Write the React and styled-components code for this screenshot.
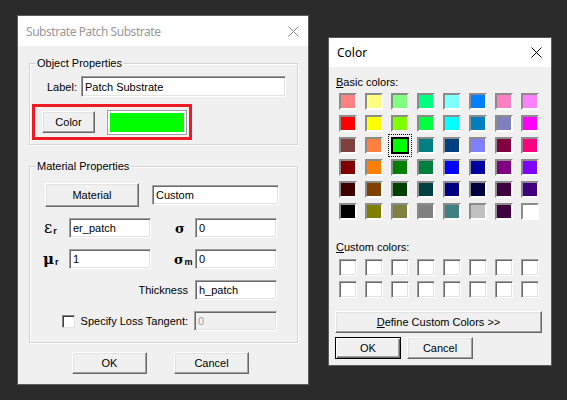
import React from "react";
import styled, { createGlobalStyle, css } from "styled-components";

const Global = createGlobalStyle`
  html, body { margin: 0; padding: 0; background: #2b2b2b; }
  body { font-family: "Liberation Sans", Arial, sans-serif; font-size: 11px; color: #000; }
  * { box-sizing: border-box; }
`;

const Screen = styled.div`
  display: flex;
  align-items: flex-start;
  padding: 15px 0 0 17px;
  height: 400px;
  overflow: hidden;
`;

const Window = styled.div`
  width: ${(p) => p.$w}px;
  height: ${(p) => p.$h}px;
  margin-top: ${(p) => p.$top || 0}px;
  margin-left: ${(p) => p.$left || 0}px;
  background: #f0f0f0;
  border: 1px solid #5c5c5c;
  display: flex;
  flex-direction: column;
`;

const TitleBar = styled.div`
  height: ${(p) => p.$h}px;
  flex: none;
  background: #fff;
  display: flex;
  align-items: center;
  justify-content: space-between;
  padding: 0 9px 0 8px;
  font-family: "Noto Sans", "Open Sans", sans-serif;
  font-size: 12px;
  color: ${(p) => (p.$active ? "#000" : "#999")};
`;

const TitleText = styled.span`
  letter-spacing: -0.45px;
`;

const Close = ({ color }) => (
  <svg width="11" height="11" viewBox="0 0 11 11">
    <path d="M0.5 0.5 L10.5 10.5 M10.5 0.5 L0.5 10.5" stroke={color} strokeWidth="1" fill="none" />
  </svg>
);

const Body = styled.div`
  padding: ${(p) => p.$pad};
  display: flex;
  flex-direction: column;
`;

const Group = styled.fieldset`
  margin: ${(p) => p.$mt || 0}px 0 0 0;
  padding: ${(p) => p.$pad};
  border: 1px solid #d5d5d5;
  box-shadow: inset 1px 1px 0 #fff, 1px 1px 0 #fff;
  min-width: 0;
  display: flex;
  flex-direction: column;
`;

const Legend = styled.legend`
  margin-left: 6px;
  padding: 0 1px;
  line-height: 13px;
  font-size: 11px;
`;

const Row = styled.div`
  display: flex;
  align-items: center;
  gap: ${(p) => p.$gap || 0}px;
  padding-left: ${(p) => p.$pl || 0}px;
  margin-top: ${(p) => p.$mt || 0}px;
`;

const FieldGrid = styled.div`
  display: grid;
  grid-template-columns: 39px 82px 22px 22px 82px;
  grid-auto-rows: 20px;
  align-items: center;
  margin-top: 11px;
`;

const Button = styled.button`
  width: ${(p) => p.$w}px;
  height: ${(p) => p.$h || 22}px;
  flex: none;
  padding: 0;
  font-family: "Liberation Sans", Arial, sans-serif;
  font-size: 11px;
  color: #000;
  background: #f0f0f0;
  border: 1px solid;
  border-color: #fff #696969 #696969 #fff;
  box-shadow: inset -1px -1px 0 #a0a0a0, inset 1px 1px 0 #e3e3e3;
  ${(p) =>
    p.$default &&
    css`
      border: 1px solid #000;
      box-shadow: inset 1px 1px 0 #fff, inset -1px -1px 0 #696969, inset -2px -2px 0 #a0a0a0;
    `}
`;

const Input = styled.div`
  grid-column: ${(p) => p.$col || "auto"};
  width: ${(p) => p.$w}px;
  height: ${(p) => p.$h || 20}px;
  margin-left: ${(p) => p.$ml || 0}px;
  flex: none;
  display: flex;
  align-items: center;
  padding-left: 3px;
  font-size: 11px;
  background: ${(p) => (p.$disabled ? "#f0f0f0" : "#fff")};
  color: ${(p) => (p.$disabled ? "#a0a0a0" : "#000")};
  border: 1px solid;
  border-color: #a0a0a0 #fff #fff #a0a0a0;
  box-shadow: inset 1px 1px 0 #696969, inset -1px -1px 0 #e3e3e3;
`;

const Highlight = styled.div`
  width: 160px;
  height: 36px;
  border: 3px solid #ed1c24;
  display: flex;
  align-items: center;
  gap: 12px;
  padding-left: 7px;
  margin: 7px 0 0 2px;
`;

const Swatch = styled.div`
  width: 80px;
  height: 25px;
  border: 1px solid #a0a0a0;
  padding: 2px;
  background: #fff;
  & > div {
    width: 100%;
    height: 100%;
    background: ${(p) => p.$color};
  }
`;

const Sym = styled.span`
  grid-column: ${(p) => p.$col};
  height: 20px;
  display: flex;
  align-items: center;
  padding-left: ${(p) => p.$pl || 0}px;
  font-family: "DejaVu Serif", "Liberation Serif", serif;
  font-size: ${(p) => p.$size || 15}px;
  font-weight: ${(p) => p.$weight || 700};
  line-height: 1;
  & sub {
    font-family: "Liberation Sans", Arial, sans-serif;
    font-size: 9px;
    font-weight: 700;
    line-height: 0;
    position: relative;
    top: 3px;
    vertical-align: baseline;
    margin-left: 1px;
  }
`;

const RightLabel = styled.div`
  grid-column: 1 / 5;
  justify-self: end;
  margin-right: 7px;
  display: flex;
  align-items: center;
  gap: 6px;
`;

const Check = styled.span`
  width: 13px;
  height: 13px;
  background: #fff;
  border: 1px solid;
  border-color: #808080 #e3e3e3 #e3e3e3 #808080;
  box-shadow: inset 1px 1px 0 #404040;
`;

const Caption = styled.div`
  line-height: 14px;
  margin: ${(p) => p.$m};
  font-size: 11px;
`;

const ColorGrid = styled.div`
  display: grid;
  grid-template-columns: repeat(8, 18px);
  grid-auto-rows: 17px;
  column-gap: 8px;
  row-gap: 5px;
  margin: ${(p) => p.$m};
`;

const Cell = styled.div`
  background: ${(p) => p.$color};
  border: 2px solid;
  border-color: #8c8c8c #fff #fff #8c8c8c;
  ${(p) =>
    p.$selected &&
    css`
      border: 2px solid #000;
      outline: 1px dotted #000;
      outline-offset: 2px;
    `}
`;

const CustomCell = styled.div`
  background: #fff;
  border: 1px solid;
  border-color: #a0a0a0 #fff #fff #a0a0a0;
  box-shadow: inset 1px 1px 0 #696969, inset -1px -1px 0 #e3e3e3;
`;

const basic = [
  "#FF8080", "#FFFF80", "#80FF80", "#00FF80", "#80FFFF", "#0080FF", "#FF80C0", "#FF80FF",
  "#FF0000", "#FFFF00", "#80FF00", "#00FF40", "#00FFFF", "#0080C0", "#8080C0", "#FF00FF",
  "#804040", "#FF8040", "#00FF00", "#008080", "#004080", "#8080FF", "#800040", "#FF0080",
  "#800000", "#FF8000", "#008000", "#008040", "#0000FF", "#0000A0", "#800080", "#8000FF",
  "#400000", "#804000", "#004000", "#004040", "#000080", "#000040", "#400040", "#400080",
  "#000000", "#808000", "#808040", "#808080", "#408080", "#C0C0C0", "#400040", "#FFFFFF",
];

export default function App() {
  return (
    <>
      <Global />
      <Screen>
        <Window $w={292} $h={370}>
          <TitleBar $h={30}>
            <TitleText>Substrate Patch Substrate</TitleText>
            <Close color="#8a8a8a" />
          </TitleBar>
          <Body $pad="11px 10px 0 11px">
            <Group $pad="6px 0 4px 0">
              <Legend>Object Properties</Legend>
              <Row $pl={17} $gap={4}>
                <span>Label:</span>
                <Input $w={205} $h={21}>Patch Substrate</Input>
              </Row>
              <Highlight>
                <Button $w={53}>Color</Button>
                <Swatch $color="#00ff00">
                  <div />
                </Swatch>
              </Highlight>
            </Group>

            <Group $mt={15} $pad="10px 0 11px 0">
              <Legend>Material Properties</Legend>
              <Row $pl={15} $gap={13}>
                <Button $w={94} $h={24}>Material</Button>
                <Input $w={127}>Custom</Input>
              </Row>
              <FieldGrid>
                <Sym $col={1} $pl={14} $size={16} $weight={400}>
                  ε<sub>r</sub>
                </Sym>
                <Input $col={2} $w={82}>er_patch</Input>
                <Sym $col={4} $pl={2} $size={13}>σ</Sym>
                <Input $col={5} $w={82}>0</Input>
              </FieldGrid>
              <FieldGrid>
                <Sym $col={1} $pl={13} $size={15}>
                  μ<sub>r</sub>
                </Sym>
                <Input $col={2} $w={82}>1</Input>
                <Sym $col={4} $pl={1} $size={13}>
                  σ<sub>m</sub>
                </Sym>
                <Input $col={5} $w={82}>0</Input>
              </FieldGrid>
              <FieldGrid>
                <RightLabel>Thickness</RightLabel>
                <Input $col={5} $w={82}>h_patch</Input>
              </FieldGrid>
              <FieldGrid>
                <RightLabel>
                  <Check />
                  <span>Specify Loss Tangent:</span>
                </RightLabel>
                <Input $col={5} $w={83} $ml={-1} $disabled>0</Input>
              </FieldGrid>
            </Group>

            <Row $pl={43} $gap={27} $mt={9}>
              <Button $w={75}>OK</Button>
              <Button $w={75}>Cancel</Button>
            </Row>
          </Body>
        </Window>

        <Window $w={224} $h={329} $top={22} $left={19}>
          <TitleBar $h={29} $active>
            <span>Color</span>
            <Close color="#000" />
          </TitleBar>
          <Body $pad="8px 6px 0 6px">
            <Caption $m="0 0 0 1px">
              <u>B</u>asic colors:
            </Caption>
            <ColorGrid $m="4px 0 0 4px">
              {basic.map((c, i) => (
                <Cell key={i} $color={c} $selected={i === 18} />
              ))}
            </ColorGrid>
            <Caption $m="20px 0 0 1px">
              <u>C</u>ustom colors:
            </Caption>
            <ColorGrid $m="5px 0 0 4px">
              {Array.from({ length: 16 }).map((_, i) => (
                <CustomCell key={i} />
              ))}
            </ColorGrid>
            <Row $mt={13}>
              <Button $w={207}>
                <u>D</u>efine Custom Colors &gt;&gt;
              </Button>
            </Row>
            <Row $mt={4} $gap={6}>
              <Button $w={66} $default>OK</Button>
              <Button $w={66}>Cancel</Button>
            </Row>
          </Body>
        </Window>
      </Screen>
    </>
  );
}
